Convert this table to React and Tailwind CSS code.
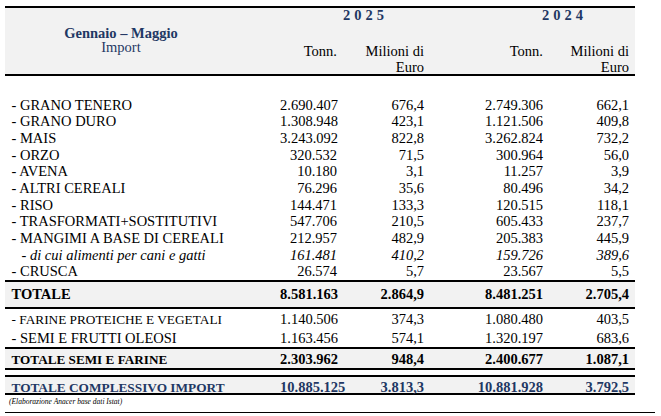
import React from "react";

const GRID = "grid grid-cols-[275px_62px_87px_119px_87px]";
const NAVY = "text-[#1f3864]";

const rows = [
  ["- GRANO TENERO", "2.690.407", "676,4", "2.749.306", "662,1"],
  ["- GRANO DURO", "1.308.948", "423,1", "1.121.506", "409,8"],
  ["- MAIS", "3.243.092", "822,8", "3.262.824", "732,2"],
  ["- ORZO", "320.532", "71,5", "300.964", "56,0"],
  ["- AVENA", "10.180", "3,1", "11.257", "3,9"],
  ["- ALTRI CEREALI", "76.296", "35,6", "80.496", "34,2"],
  ["- RISO", "144.471", "133,3", "120.515", "118,1"],
  ["- TRASFORMATI+SOSTITUTIVI", "547.706", "210,5", "605.433", "237,7"],
  ["- MANGIMI A BASE DI CEREALI", "212.957", "482,9", "205.383", "445,9"],
  ["- di cui alimenti per cani e gatti", "161.481", "410,2", "159.726", "389,6", true],
  ["- CRUSCA", "26.574", "5,7", "23.567", "5,5"],
];

function Nums({ values }) {
  return (
    <>
      <div className="text-right pr-[5px]">{values[0]}</div>
      <div className="text-right pr-[5px]">{values[1]}</div>
      <div className="text-right pr-[5px]">{values[2]}</div>
      <div className="text-right pr-[6px]">{values[3]}</div>
    </>
  );
}

export default function App() {
  return (
    <div className="w-[661px] h-[416px] bg-white text-black pl-[5px] pt-[6px] overflow-hidden font-['Liberation_Serif','Times_New_Roman',serif]">
      <div className="w-[630px]">
        {/* Header */}
        <div className={`${GRID} h-[70px] bg-[#f2f2f2] border-t-2 border-b-2 border-black text-[14.5px]`}>
          <div className={`row-span-2 w-[232px] text-center pt-[19px] leading-[13.5px] ${NAVY}`}>
            <div className="font-bold">Gennaio – Maggio</div>
            <div>Import</div>
          </div>
          <div className={`col-span-2 h-[14px] leading-[14px] pl-[63px] font-bold tracking-[4px] ${NAVY}`}>2025</div>
          <div className={`col-span-2 h-[14px] leading-[14px] pl-[113px] font-bold tracking-[4px] ${NAVY}`}>2024</div>
          <div className="text-right pr-[5px] pt-[22px] leading-[15.5px]">Tonn.</div>
          <div className="text-right pr-[5px] pt-[22px] leading-[15.5px]">
            Milioni di
            <br />
            Euro
          </div>
          <div className="text-right pr-[5px] pt-[22px] leading-[15.5px]">Tonn.</div>
          <div className="text-right pr-[6px] pt-[22px] leading-[15.5px]">
            Milioni di
            <br />
            Euro
          </div>
        </div>

        {/* Cereali */}
        <div className="mt-[20.5px] text-[14.5px]">
          {rows.map((r) => (
            <div
              key={r[0]}
              className={`${GRID} h-[16.7px] leading-[16.7px] ${r[5] ? "italic" : ""}`}
            >
              <div className={r[5] ? "pl-[16.5px]" : "pl-[6.5px]"}>{r[0]}</div>
              <Nums values={r.slice(1, 5)} />
            </div>
          ))}
        </div>

        {/* Totale */}
        <div className={`${GRID} h-[29px] items-center bg-[#f2f2f2] border-t-2 border-b-2 border-black font-bold text-[14.5px]`}>
          <div className="pl-[6.5px]">TOTALE</div>
          <Nums values={["8.581.163", "2.864,9", "8.481.251", "2.705,4"]} />
        </div>

        <div className={`${GRID} h-[18.85px] items-center text-[14.5px]`}>
          <div className="pl-[6.5px] text-[13.3px]">- FARINE PROTEICHE E VEGETALI</div>
          <Nums values={["1.140.506", "374,3", "1.080.480", "403,5"]} />
        </div>
        <div className={`${GRID} h-[18.85px] items-center text-[14.5px]`}>
          <div className="pl-[6.5px]">- SEMI E FRUTTI OLEOSI</div>
          <Nums values={["1.163.456", "574,1", "1.320.197", "683,6"]} />
        </div>

        <div className={`${GRID} h-[23px] items-center bg-[#f2f2f2] border-t-2 border-b-2 border-black font-bold text-[14.5px]`}>
          <div className="pl-[6.5px] text-[13.2px]">TOTALE SEMI E FARINE</div>
          <Nums values={["2.303.962", "948,4", "2.400.677", "1.087,1"]} />
        </div>

        <div className={`${GRID} mt-[5px] h-[20px] items-center bg-[#f2f2f2] border-t-2 border-b-2 border-black font-bold text-[14.5px] ${NAVY}`}>
          <div className="pl-[6.5px] text-[13.3px]">TOTALE COMPLESSIVO IMPORT</div>
          <Nums values={["10.885.125", "3.813,3", "10.881.928", "3.792,5"]} />
        </div>

        <div className="h-[14px] leading-[14px] pl-[4px] text-[7.5px] italic">
          (Elaborazione Anacer base dati Istat)
        </div>
      </div>
      <div className="mt-[3px] w-[650px] h-[1px] bg-black" />
    </div>
  );
}
